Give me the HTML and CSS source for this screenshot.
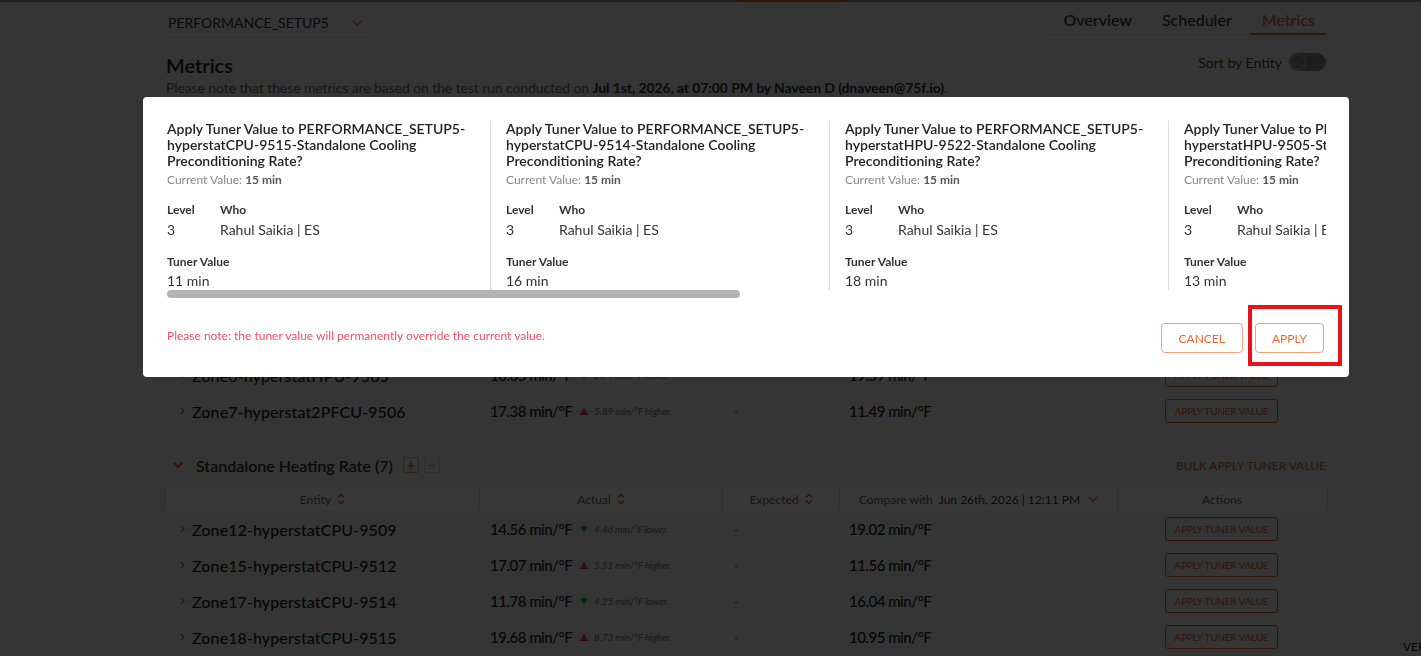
FILE: index.html
```html
<!DOCTYPE html>
<html lang="en">
  <head>
    <meta charset="UTF-8" />
    <meta name="viewport" content="width=device-width, initial-scale=1.0" />
    <title>Metrics</title>
    <link rel="stylesheet" href="styles.css">
  </head>
  <body>
    <div class="topbar"><div class="topbar-active"></div></div>

    <div class="page">
      <div class="top">
        <div class="dropdown">
          <span>PERFORMANCE_SETUP5</span>
          <svg width="10" height="6" viewBox="0 0 10 6"><path d="M1 1l4 4 4-4" fill="none" stroke="#e2632a" stroke-width="1.5"/></svg>
        </div>
        <div class="tabs">
          <span class="tab">Overview</span>
          <span class="tab">Scheduler</span>
          <span class="tab active">Metrics</span>
        </div>
      </div>

      <div class="title-row">
        <h2>Metrics</h2>
        <div class="sort-by">
          <span>Sort by Entity</span>
          <span class="toggle"><span class="knob">&ndash;</span></span>
        </div>
      </div>
      <p class="note">Please note that these metrics are based on the test run conducted on <b>Jul 1st, 2026, at 07:00 PM by Naveen D (dnaveen@75f.io)</b>.</p>

      <!-- Section 1 -->
      <div class="section-head first">
        <svg class="sec-chev" width="12" height="8" viewBox="0 0 12 8"><path d="M1.5 1.5 6 6 10.5 1.5" fill="none" stroke="#e2632a" stroke-width="2.2"/></svg>
        <span class="sec-title">Standalone Cooling Preconditioning Rate (7)</span>
        <span class="box plus">+</span><span class="box minus">&minus;</span>
        <span class="bulk">BULK APPLY TUNER VALUE</span>
      </div>
      <div class="table">
        <div class="th">Entity <svg class="sort" width="8" height="12" viewBox="0 0 8 12"><path d="M1 4.5 4 1.5 7 4.5M1 7.5 4 10.5 7 7.5" fill="none" stroke="#e2632a" stroke-width="1.3"/></svg></div>
        <div class="th">Actual <svg class="sort" width="8" height="12" viewBox="0 0 8 12"><path d="M1 4.5 4 1.5 7 4.5M1 7.5 4 10.5 7 7.5" fill="none" stroke="#e2632a" stroke-width="1.3"/></svg></div>
        <div class="th">Expected <svg class="sort" width="8" height="12" viewBox="0 0 8 12"><path d="M1 4.5 4 1.5 7 4.5M1 7.5 4 10.5 7 7.5" fill="none" stroke="#e2632a" stroke-width="1.3"/></svg></div>
        <div class="th">Compare with <span class="cmp-date">Jun 26th, 2026 | 12:11 PM</span> <svg width="10" height="6" viewBox="0 0 10 6"><path d="M1 1l4 4 4-4" fill="none" stroke="#e2632a" stroke-width="1.5"/></svg></div>
        <div class="th">Actions</div>

        <div class="td entity"><svg width="5" height="8" viewBox="0 0 5 8"><path d="M1 1l3 3-3 3" fill="none" stroke="#e2632a" stroke-width="1.3"/></svg>Zone1-hyperstatCPU-9501</div>
        <div class="td actual"><span class="num">15.12 min/&deg;F</span><i class="tri up"></i><em>2.04 min/&deg;F higher.</em></div>
        <div class="td">-</div>
        <div class="td cmp"><span class="num">13.08 min/&deg;F</span></div>
        <div class="td act"><button class="tuner-btn">APPLY TUNER VALUE</button></div>

        <div class="td entity"><svg width="5" height="8" viewBox="0 0 5 8"><path d="M1 1l3 3-3 3" fill="none" stroke="#e2632a" stroke-width="1.3"/></svg>Zone2-hyperstatCPU-9502</div>
        <div class="td actual"><span class="num">12.40 min/&deg;F</span><i class="tri down"></i><em>1.22 min/&deg;F lower.</em></div>
        <div class="td">-</div>
        <div class="td cmp"><span class="num">13.62 min/&deg;F</span></div>
        <div class="td act"><button class="tuner-btn">APPLY TUNER VALUE</button></div>

        <div class="td entity"><svg width="5" height="8" viewBox="0 0 5 8"><path d="M1 1l3 3-3 3" fill="none" stroke="#e2632a" stroke-width="1.3"/></svg>Zone3-hyperstatCPU-9503</div>
        <div class="td actual"><span class="num">18.01 min/&deg;F</span><i class="tri up"></i><em>4.77 min/&deg;F higher.</em></div>
        <div class="td">-</div>
        <div class="td cmp"><span class="num">13.24 min/&deg;F</span></div>
        <div class="td act"><button class="tuner-btn">APPLY TUNER VALUE</button></div>

        <div class="td entity"><svg width="5" height="8" viewBox="0 0 5 8"><path d="M1 1l3 3-3 3" fill="none" stroke="#e2632a" stroke-width="1.3"/></svg>Zone4-hyperstatHPU-9504</div>
        <div class="td actual"><span class="num">11.93 min/&deg;F</span><i class="tri down"></i><em>3.10 min/&deg;F lower.</em></div>
        <div class="td">-</div>
        <div class="td cmp"><span class="num">15.03 min/&deg;F</span></div>
        <div class="td act"><button class="tuner-btn">APPLY TUNER VALUE</button></div>

        <div class="td entity"><svg width="5" height="8" viewBox="0 0 5 8"><path d="M1 1l3 3-3 3" fill="none" stroke="#e2632a" stroke-width="1.3"/></svg>Zone5-hyperstatCPU-9515</div>
        <div class="td actual"><span class="num">14.80 min/&deg;F</span><i class="tri up"></i><em>0.92 min/&deg;F higher.</em></div>
        <div class="td">-</div>
        <div class="td cmp"><span class="num">13.88 min/&deg;F</span></div>
        <div class="td act"><button class="tuner-btn">APPLY TUNER VALUE</button></div>

        <div class="td entity"><svg width="5" height="8" viewBox="0 0 5 8"><path d="M1 1l3 3-3 3" fill="none" stroke="#e2632a" stroke-width="1.3"/></svg>Zone6-hyperstatHPU-9505</div>
        <div class="td actual"><span class="num">16.65 min/&deg;F</span><i class="tri down"></i><em>2.94 min/&deg;F lower.</em></div>
        <div class="td">-</div>
        <div class="td cmp"><span class="num">19.59 min/&deg;F</span></div>
        <div class="td act"><button class="tuner-btn">APPLY TUNER VALUE</button></div>

        <div class="td entity"><svg width="5" height="8" viewBox="0 0 5 8"><path d="M1 1l3 3-3 3" fill="none" stroke="#e2632a" stroke-width="1.3"/></svg>Zone7-hyperstat2PFCU-9506</div>
        <div class="td actual"><span class="num">17.38 min/&deg;F</span><i class="tri up"></i><em>5.89 min/&deg;F higher.</em></div>
        <div class="td">-</div>
        <div class="td cmp"><span class="num">11.49 min/&deg;F</span></div>
        <div class="td act"><button class="tuner-btn">APPLY TUNER VALUE</button></div>
      </div>

      <!-- Section 2 -->
      <div class="section-head">
        <svg class="sec-chev" width="12" height="8" viewBox="0 0 12 8"><path d="M1.5 1.5 6 6 10.5 1.5" fill="none" stroke="#e2632a" stroke-width="2.2"/></svg>
        <span class="sec-title">Standalone Heating Rate (7)</span>
        <span class="box plus">+</span><span class="box minus">&minus;</span>
        <span class="bulk">BULK APPLY TUNER VALUE</span>
      </div>
      <div class="table">
        <div class="th">Entity <svg class="sort" width="8" height="12" viewBox="0 0 8 12"><path d="M1 4.5 4 1.5 7 4.5M1 7.5 4 10.5 7 7.5" fill="none" stroke="#e2632a" stroke-width="1.3"/></svg></div>
        <div class="th">Actual <svg class="sort" width="8" height="12" viewBox="0 0 8 12"><path d="M1 4.5 4 1.5 7 4.5M1 7.5 4 10.5 7 7.5" fill="none" stroke="#e2632a" stroke-width="1.3"/></svg></div>
        <div class="th">Expected <svg class="sort" width="8" height="12" viewBox="0 0 8 12"><path d="M1 4.5 4 1.5 7 4.5M1 7.5 4 10.5 7 7.5" fill="none" stroke="#e2632a" stroke-width="1.3"/></svg></div>
        <div class="th">Compare with <span class="cmp-date">Jun 26th, 2026 | 12:11 PM</span> <svg width="10" height="6" viewBox="0 0 10 6"><path d="M1 1l4 4 4-4" fill="none" stroke="#e2632a" stroke-width="1.5"/></svg></div>
        <div class="th">Actions</div>

        <div class="td entity"><svg width="5" height="8" viewBox="0 0 5 8"><path d="M1 1l3 3-3 3" fill="none" stroke="#e2632a" stroke-width="1.3"/></svg>Zone12-hyperstatCPU-9509</div>
        <div class="td actual"><span class="num">14.56 min/&deg;F</span><i class="tri down"></i><em>4.46 min/&deg;F lower.</em></div>
        <div class="td">-</div>
        <div class="td cmp"><span class="num">19.02 min/&deg;F</span></div>
        <div class="td act"><button class="tuner-btn">APPLY TUNER VALUE</button></div>

        <div class="td entity"><svg width="5" height="8" viewBox="0 0 5 8"><path d="M1 1l3 3-3 3" fill="none" stroke="#e2632a" stroke-width="1.3"/></svg>Zone15-hyperstatCPU-9512</div>
        <div class="td actual"><span class="num">17.07 min/&deg;F</span><i class="tri up"></i><em>5.51 min/&deg;F higher.</em></div>
        <div class="td">-</div>
        <div class="td cmp"><span class="num">11.56 min/&deg;F</span></div>
        <div class="td act"><button class="tuner-btn">APPLY TUNER VALUE</button></div>

        <div class="td entity"><svg width="5" height="8" viewBox="0 0 5 8"><path d="M1 1l3 3-3 3" fill="none" stroke="#e2632a" stroke-width="1.3"/></svg>Zone17-hyperstatCPU-9514</div>
        <div class="td actual"><span class="num">11.78 min/&deg;F</span><i class="tri down"></i><em>4.25 min/&deg;F lower.</em></div>
        <div class="td">-</div>
        <div class="td cmp"><span class="num">16.04 min/&deg;F</span></div>
        <div class="td act"><button class="tuner-btn">APPLY TUNER VALUE</button></div>

        <div class="td entity"><svg width="5" height="8" viewBox="0 0 5 8"><path d="M1 1l3 3-3 3" fill="none" stroke="#e2632a" stroke-width="1.3"/></svg>Zone18-hyperstatCPU-9515</div>
        <div class="td actual"><span class="num">19.68 min/&deg;F</span><i class="tri up"></i><em>8.73 min/&deg;F higher.</em></div>
        <div class="td">-</div>
        <div class="td cmp"><span class="num">10.95 min/&deg;F</span></div>
        <div class="td act"><button class="tuner-btn">APPLY TUNER VALUE</button></div>
      </div>
    </div>

    <div class="version">VERSION 2.4.1</div>

    <!-- Apply tuner modal -->
    <div class="backdrop"></div>
    <div class="modal">
      <div class="cards">
        <div class="card">
          <div class="card-title">Apply Tuner Value to PERFORMANCE_SETUP5-hyperstatCPU-9515-Standalone Cooling Preconditioning Rate?</div>
          <div class="current">Current Value: <b>15 min</b></div>
          <div class="meta">
            <div><div class="lbl">Level</div><div class="val">3</div></div>
            <div><div class="lbl">Who</div><div class="val">Rahul Saikia | ES</div></div>
          </div>
          <div class="lbl tuner-lbl">Tuner Value</div>
          <div class="val last">11 min</div>
        </div>
        <div class="card">
          <div class="card-title">Apply Tuner Value to PERFORMANCE_SETUP5-hyperstatCPU-9514-Standalone Cooling Preconditioning Rate?</div>
          <div class="current">Current Value: <b>15 min</b></div>
          <div class="meta">
            <div><div class="lbl">Level</div><div class="val">3</div></div>
            <div><div class="lbl">Who</div><div class="val">Rahul Saikia | ES</div></div>
          </div>
          <div class="lbl tuner-lbl">Tuner Value</div>
          <div class="val last">16 min</div>
        </div>
        <div class="card">
          <div class="card-title">Apply Tuner Value to PERFORMANCE_SETUP5-hyperstatHPU-9522-Standalone Cooling Preconditioning Rate?</div>
          <div class="current">Current Value: <b>15 min</b></div>
          <div class="meta">
            <div><div class="lbl">Level</div><div class="val">3</div></div>
            <div><div class="lbl">Who</div><div class="val">Rahul Saikia | ES</div></div>
          </div>
          <div class="lbl tuner-lbl">Tuner Value</div>
          <div class="val last">18 min</div>
        </div>
        <div class="card">
          <div class="card-title">Apply Tuner Value to PERFORMANCE_SETUP5-hyperstatHPU-9505-Standalone Cooling Preconditioning Rate?</div>
          <div class="current">Current Value: <b>15 min</b></div>
          <div class="meta">
            <div><div class="lbl">Level</div><div class="val">3</div></div>
            <div><div class="lbl">Who</div><div class="val">Rahul Saikia | ES</div></div>
          </div>
          <div class="lbl tuner-lbl">Tuner Value</div>
          <div class="val last">13 min</div>
        </div>
        <div class="card">
          <div class="card-title">Apply Tuner Value to PERFORMANCE_SETUP5-hyperstat2PFCU-9506-Standalone Cooling Preconditioning Rate?</div>
          <div class="current">Current Value: <b>15 min</b></div>
          <div class="meta">
            <div><div class="lbl">Level</div><div class="val">3</div></div>
            <div><div class="lbl">Who</div><div class="val">Rahul Saikia | ES</div></div>
          </div>
          <div class="lbl tuner-lbl">Tuner Value</div>
          <div class="val last">12 min</div>
        </div>
        <div class="card">
          <div class="card-title">Apply Tuner Value to PERFORMANCE_SETUP5-hyperstatCPU-9501-Standalone Cooling Preconditioning Rate?</div>
          <div class="current">Current Value: <b>15 min</b></div>
          <div class="meta">
            <div><div class="lbl">Level</div><div class="val">3</div></div>
            <div><div class="lbl">Who</div><div class="val">Rahul Saikia | ES</div></div>
          </div>
          <div class="lbl tuner-lbl">Tuner Value</div>
          <div class="val last">14 min</div>
        </div>
        <div class="card">
          <div class="card-title">Apply Tuner Value to PERFORMANCE_SETUP5-hyperstatHPU-9504-Standalone Cooling Preconditioning Rate?</div>
          <div class="current">Current Value: <b>15 min</b></div>
          <div class="meta">
            <div><div class="lbl">Level</div><div class="val">3</div></div>
            <div><div class="lbl">Who</div><div class="val">Rahul Saikia | ES</div></div>
          </div>
          <div class="lbl tuner-lbl">Tuner Value</div>
          <div class="val last">17 min</div>
        </div>
      </div>
      <div class="hscroll"><div class="hscroll-thumb"></div></div>
      <div class="modal-foot">
        <span class="warn">Please note: the tuner value will permanently override the current value.</span>
        <div class="actions">
          <button class="outline-btn">CANCEL</button>
          <button class="outline-btn">APPLY</button>
        </div>
      </div>
    </div>
    <div class="highlight"></div>
  </body>
</html>
```

FILE: styles.css
```css
* {
  box-sizing: border-box;
}
body {
  margin: 0;
  font-family: Lato, "Open Sans", sans-serif;
  background-color: #efefef;
  color: #222;
  height: 656px;
  overflow: hidden;
}
.topbar {
  height: 2px;
  background: #8c8c8c;
}
.topbar-active {
  width: 106px;
  height: 2px;
  margin-left: 737px;
  background: #e2632a;
}
.page {
  width: 1160px;
  margin-left: 166px;
}
.top {
  display: flex;
  justify-content: space-between;
  align-items: flex-start;
  height: 36px;
}
.dropdown {
  width: 200px;
  margin-top: 11px;
  padding: 0 4px 4px 2px;
  line-height: 20px;
  font-size: 14px;
  color: #333;
  border-bottom: 1px solid #cfcfcf;
  display: flex;
  justify-content: space-between;
  align-items: center;
}
.tabs {
  display: flex;
  margin-top: 7px;
  border-bottom: 1px solid #cfcfcf;
}
.tab {
  font-size: 16px;
  line-height: 22px;
  font-weight: 500;
  padding: 0 11px 2px 12px;
  margin-left: 7px;
  color: #333;
  border-bottom: 2px solid transparent;
  margin-bottom: -1px;
}
.tab.active {
  color: #e2632a;
  border-bottom-color: #e2632a;
}
.title-row {
  display: flex;
  justify-content: space-between;
  align-items: flex-start;
  margin-top: 15px;
}
.title-row h2 {
  margin: 0;
  font-size: 20px;
  line-height: 24px;
  font-weight: 600;
  color: #222;
}
.sort-by {
  display: flex;
  align-items: center;
  gap: 7px;
  font-size: 14px;
  color: #444;
}
.toggle {
  width: 37px;
  height: 18px;
  border-radius: 9px;
  background: #8a8a8a;
  display: flex;
  align-items: center;
  padding-left: 1px;
}
.knob {
  width: 16px;
  height: 16px;
  border-radius: 50%;
  border: 1px solid #c8c8c8;
  background: #8a8a8a;
  font-size: 10px;
  line-height: 13px;
  text-align: center;
  color: #c8c8c8;
}
.note {
  margin: 1px 0 0;
  font-size: 14px;
  line-height: 20px;
  letter-spacing: -0.1px;
  color: #666;
}
.note b {
  color: #333;
}
.section-head {
  display: flex;
  align-items: center;
  height: 24px;
  margin-top: 24px;
  padding-left: 6px;
}
.section-head.first {
  margin-top: 22px;
}
.sec-chev {
  margin-right: 12px;
}
.sec-title {
  font-size: 16px;
  font-weight: 600;
  color: #333;
}
.box {
  width: 16px;
  height: 16px;
  border: 1px solid #ccc;
  border-radius: 2px;
  font-size: 14px;
  line-height: 13px;
  text-align: center;
  color: #999;
  margin-left: 5px;
}
.box.plus {
  margin-left: 10px;
  color: #e2632a;
  border-color: #e9a07f;
  font-weight: 700;
}
.bulk {
  margin-left: auto;
  font-size: 12px;
  color: #e2632a;
}
.table {
  display: grid;
  grid-template-columns: 313px 243px 117px 278px 209px;
  margin-top: 9px;
}
.section-head:not(.first) + .table {
  margin-top: 10px;
}
.th {
  height: 24px;
  background: #fff;
  display: flex;
  align-items: center;
  justify-content: center;
  gap: 6px;
  font-size: 12px;
  color: #666;
}
.th + .th {
  border-left: 1px solid #ddd;
}
.cmp-date {
  color: #333;
  margin-right: 2px;
}
.td {
  height: 36px;
  display: flex;
  align-items: center;
  padding-left: 12px;
  font-size: 12px;
  color: #555;
}
.td.entity {
  padding-left: 14px;
  gap: 7px;
  font-size: 16px;
  font-weight: 500;
  letter-spacing: 0.1px;
  color: #222;
}
.td.actual {
  padding-left: 11px;
}
.td.cmp {
  padding-left: 10px;
}
.num {
  font-size: 15px;
  font-weight: 500;
  letter-spacing: -0.5px;
  color: #222;
}
.td.act {
  padding-left: 0;
  justify-content: center;
}
.tri {
  width: 0;
  height: 0;
  margin: 0 6px 0 8px;
  border-left: 4.5px solid transparent;
  border-right: 4.5px solid transparent;
}
.tri.up {
  border-bottom: 7px solid #e53935;
}
.tri.down {
  border-top: 7px solid #2e9e5b;
}
.td em {
  font-size: 10px;
  letter-spacing: -0.2px;
  color: #777;
}
.tuner-btn {
  height: 24px;
  padding: 0 9px;
  font-family: inherit;
  font-size: 10px;
  letter-spacing: -0.2px;
  color: #e2632a;
  background: transparent;
  border: 1px solid #e2632a;
  border-radius: 3px;
}
.version {
  position: fixed;
  left: 1403px;
  top: 640px;
  font-size: 12px;
  line-height: 14px;
  color: #222;
  white-space: nowrap;
}
.backdrop {
  position: fixed;
  inset: 0;
  background: rgba(0, 0, 0, 0.78);
}
.modal {
  position: fixed;
  left: 143px;
  top: 97px;
  width: 1206px;
  height: 280px;
  background: #fff;
  border-radius: 4px;
  padding: 24px 23px 24px 24px;
}
.cards {
  display: flex;
  overflow: hidden;
}
.card {
  flex: 0 0 auto;
  width: 324px;
  padding-right: 16px;
  margin-right: 15px;
  border-right: 1px solid #ddd;
}
.card:last-child {
  margin-right: 0;
}
.card-title {
  font-size: 14px;
  line-height: 16px;
  font-weight: 600;
  color: #222;
}
.current {
  margin-top: 3px;
  font-size: 12px;
  line-height: 16px;
  color: #888;
}
.current b {
  color: #555;
}
.meta {
  display: grid;
  grid-template-columns: 53px 1fr;
  margin-top: 14px;
}
.lbl {
  font-size: 12px;
  line-height: 16px;
  font-weight: 700;
  color: #333;
}
.val {
  margin-top: 2px;
  font-size: 14px;
  line-height: 20px;
  color: #333;
}
.tuner-lbl {
  margin-top: 14px;
}
.val.last {
  line-height: 18px;
}
.hscroll {
  height: 8px;
}
.hscroll-thumb {
  width: 573px;
  height: 8px;
  border-radius: 4px;
  background: #b3b3b3;
}
.modal-foot {
  display: flex;
  justify-content: space-between;
  align-items: flex-start;
  margin-top: 25px;
  padding-right: 2px;
}
.warn {
  padding-top: 5px;
  font-size: 12px;
  line-height: 16px;
  color: #f5515f;
}
.actions {
  display: flex;
  gap: 12px;
}
.outline-btn {
  height: 30px;
  padding: 0 16px;
  font-family: inherit;
  font-size: 12px;
  color: #ea6a35;
  background: #fff;
  border: 1px solid #f2a27e;
  border-radius: 4px;
}
.outline-btn:first-child {
  padding: 0 17px;
}
.highlight {
  position: fixed;
  left: 1248px;
  top: 305px;
  width: 94px;
  height: 61px;
  border: 4px solid #e8141c;
}
```
